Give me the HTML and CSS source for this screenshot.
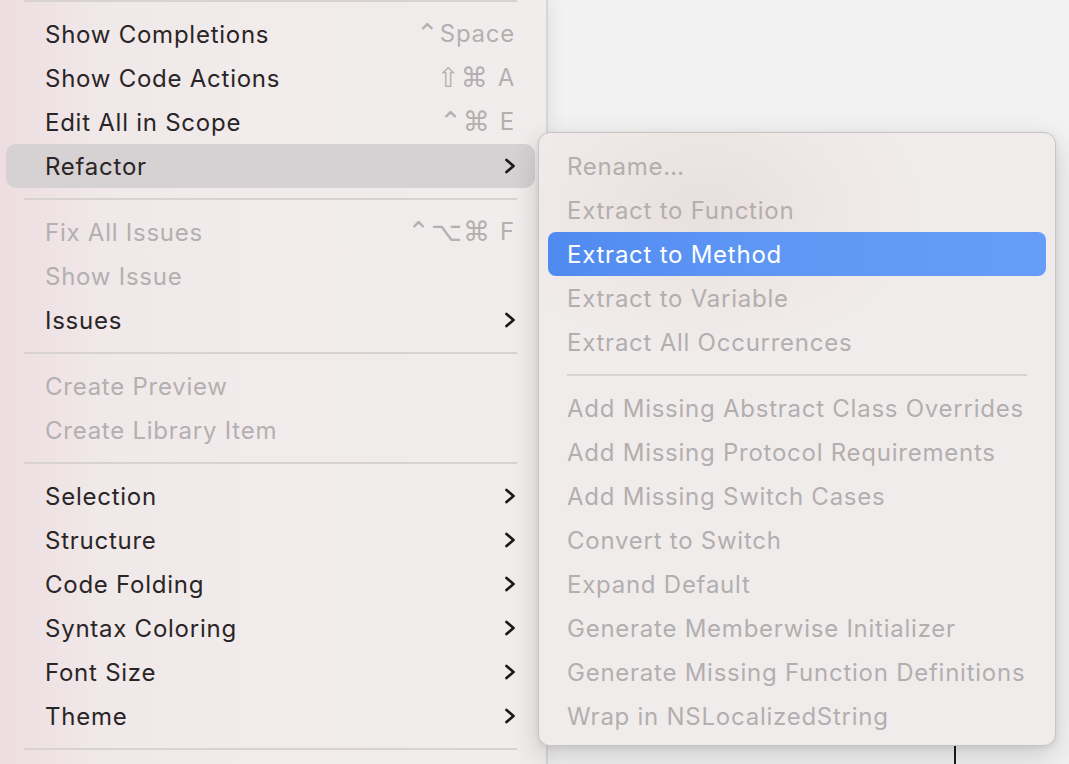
FILE: index.html
```html
<!DOCTYPE html>
<html lang="en">
<head>
<meta charset="utf-8">
<title>Editor menu</title>
<link rel="stylesheet" href="styles.css">
</head>
<body>
<div class="screen">
  <div class="menu">
    <div class="sep sep-top"></div>
    <div class="item"><span class="label">Show Completions</span><span class="shortcut"><span class="mods">⌃</span><span class="key key-word">Space</span></span></div>
    <div class="item"><span class="label">Show Code Actions</span><span class="shortcut"><span class="mods">⇧⌘</span><span class="key">A</span></span></div>
    <div class="item"><span class="label">Edit All in Scope</span><span class="shortcut"><span class="mods">⌃⌘</span><span class="key">E</span></span></div>
    <div class="item item-active"><span class="label">Refactor</span><svg class="chev" viewBox="0 0 12 18"><path d="M2.5 3 L9.5 9 L2.5 15"/></svg></div>
    <div class="sep"></div>
    <div class="item disabled"><span class="label">Fix All Issues</span><span class="shortcut"><span class="mods">⌃⌥⌘</span><span class="key">F</span></span></div>
    <div class="item disabled"><span class="label">Show Issue</span></div>
    <div class="item"><span class="label">Issues</span><svg class="chev" viewBox="0 0 12 18"><path d="M2.5 3 L9.5 9 L2.5 15"/></svg></div>
    <div class="sep"></div>
    <div class="item disabled"><span class="label">Create Preview</span></div>
    <div class="item disabled"><span class="label">Create Library Item</span></div>
    <div class="sep"></div>
    <div class="item"><span class="label">Selection</span><svg class="chev" viewBox="0 0 12 18"><path d="M2.5 3 L9.5 9 L2.5 15"/></svg></div>
    <div class="item"><span class="label">Structure</span><svg class="chev" viewBox="0 0 12 18"><path d="M2.5 3 L9.5 9 L2.5 15"/></svg></div>
    <div class="item"><span class="label">Code Folding</span><svg class="chev" viewBox="0 0 12 18"><path d="M2.5 3 L9.5 9 L2.5 15"/></svg></div>
    <div class="item"><span class="label">Syntax Coloring</span><svg class="chev" viewBox="0 0 12 18"><path d="M2.5 3 L9.5 9 L2.5 15"/></svg></div>
    <div class="item"><span class="label">Font Size</span><svg class="chev" viewBox="0 0 12 18"><path d="M2.5 3 L9.5 9 L2.5 15"/></svg></div>
    <div class="item"><span class="label">Theme</span><svg class="chev" viewBox="0 0 12 18"><path d="M2.5 3 L9.5 9 L2.5 15"/></svg></div>
    <div class="sep"></div>
  </div>
  <div class="canvas">
    <div class="caret"></div>
  </div>
  <div class="submenu">
    <div class="item disabled"><span class="label">Rename…</span></div>
    <div class="item disabled"><span class="label">Extract to Function</span></div>
    <div class="item item-selected"><span class="label">Extract to Method</span></div>
    <div class="item disabled"><span class="label">Extract to Variable</span></div>
    <div class="item disabled"><span class="label">Extract All Occurrences</span></div>
    <div class="sep"></div>
    <div class="item disabled"><span class="label">Add Missing Abstract Class Overrides</span></div>
    <div class="item disabled"><span class="label">Add Missing Protocol Requirements</span></div>
    <div class="item disabled"><span class="label">Add Missing Switch Cases</span></div>
    <div class="item disabled"><span class="label">Convert to Switch</span></div>
    <div class="item disabled"><span class="label">Expand Default</span></div>
    <div class="item disabled"><span class="label">Generate Memberwise Initializer</span></div>
    <div class="item disabled"><span class="label">Generate Missing Function Definitions</span></div>
    <div class="item disabled"><span class="label">Wrap in NSLocalizedString</span></div>
  </div>
</div>
</body>
</html>
```
FILE: styles.css
```css
* { box-sizing: border-box; }

html, body {
  margin: 0;
  padding: 0;
}

body {
  width: 1069px;
  height: 764px;
  overflow: hidden;
  background: #f2f2f2;
  font-family: Inter, "Noto Sans", "DejaVu Sans", sans-serif;
  font-size: 24px;
  font-weight: 400;
  color: #2a2526;
}

.screen {
  position: relative;
  display: flex;
  width: 1069px;
  height: 764px;
}

.menu {
  flex: none;
  width: 548px;
  height: 764px;
  padding: 0 11px 0 6px;
  background: linear-gradient(90deg, #eedde0 0%, #f0e8e9 18%, #f1ebeb 45%, #f1eded 100%);
  border-right: 2px solid #d9d5d5;
  box-shadow: 3px 0 16px rgba(0, 0, 0, 0.07);
  position: relative;
  z-index: 1;
}

.canvas {
  flex: 1;
  position: relative;
  background: #f2f2f2;
}

.caret {
  position: absolute;
  left: 406px;
  top: 690px;
  width: 2px;
  height: 74px;
  background: #1d1d1d;
}

.item {
  display: flex;
  align-items: center;
  height: 44px;
  padding: 0 20px 0 39px;
  border-radius: 10px;
  white-space: nowrap;
  letter-spacing: 0.75px;
}

.item .label {
  flex: 1;
}

.item.disabled {
  color: #b4afb0;
}

.item-active {
  background: #d6d1d2;
}

.shortcut {
  display: flex;
  align-items: center;
  height: 44px;
  color: #b4afb0;
  font-family: "DejaVu Sans", Inter, sans-serif;
  font-size: 27px;
  line-height: 44px;
  letter-spacing: 0;
}

.shortcut .mods {
  letter-spacing: 1px;
}

.shortcut .key {
  margin-left: 9px;
  font-family: Inter, "Noto Sans", sans-serif;
  font-size: 24px;
  letter-spacing: 0.75px;
}

.shortcut .key-word {
  margin-left: 0;
}

.chev {
  width: 12px;
  height: 18px;
  margin-right: -1px;
}

.chev path {
  fill: none;
  stroke: #1e1a1b;
  stroke-width: 2.7;
  stroke-linecap: round;
  stroke-linejoin: round;
}

.sep {
  height: 22px;
  display: flex;
  align-items: center;
  padding: 0 18px;
}

.sep::before {
  content: "";
  flex: 1;
  height: 2px;
  background: #d8d2d3;
}

.sep-top {
  margin-top: -10px;
}

.submenu {
  position: absolute;
  left: 538px;
  top: 132px;
  width: 518px;
  height: 614px;
  padding: 11px 9px 7px 9px;
  background:
    radial-gradient(ellipse 220px 150px at 32% 12%, rgba(225, 214, 210, 0.55), rgba(225, 214, 210, 0) 100%),
    #f1ecec;
  border: 1px solid #c9c4c4;
  border-radius: 12px;
  box-shadow: 0 10px 30px rgba(0, 0, 0, 0.16), 0 2px 6px rgba(0, 0, 0, 0.08);
  z-index: 2;
}

.submenu .item {
  padding: 0 19px;
  border-radius: 8px;
}

.submenu .item.disabled {
  color: #b3aeaf;
}

.item-selected {
  background: linear-gradient(90deg, #4f8af0 0%, #5e96f5 40%, #669df8 100%);
  color: #ffffff;
}

.submenu .sep {
  padding: 0 19px;
}

.submenu .sep::before {
  height: 2px;
  background: #d9d3d4;
}
```
